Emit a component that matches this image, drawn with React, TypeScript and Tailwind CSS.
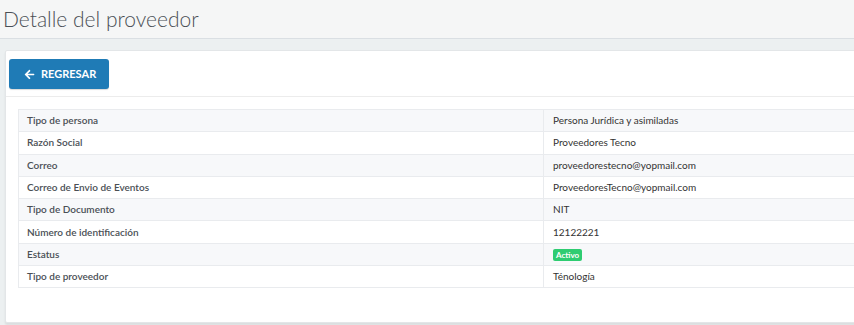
import { FaArrowLeft } from 'react-icons/fa'

const rows: { label: string; value: string; badge?: boolean }[] = [
  { label: 'Tipo de persona', value: 'Persona Jurídica y asimiladas' },
  { label: 'Razón Social', value: 'Proveedores Tecno' },
  { label: 'Correo', value: 'proveedorestecno@yopmail.com' },
  { label: 'Correo de Envio de Eventos', value: 'ProveedoresTecno@yopmail.com' },
  { label: 'Tipo de Documento', value: 'NIT' },
  { label: 'Número de identificación', value: '12122221' },
  { label: 'Estatus', value: 'Activo', badge: true },
  { label: 'Tipo de proveedor', value: 'Ténología' },
]

export default function App() {
  return (
    <div className="min-h-[325px] w-full overflow-hidden bg-[#ecf0f1] font-['Lato','Noto_Sans',sans-serif]">
      <div className="h-[39px] border-b border-[#dadfe3] bg-[#f5f6f6] pl-[3px]">
        <h1 className="text-[21px] leading-[38px] font-light text-[#4a4f55]">Detalle del proveedor</h1>
      </div>
      <div className="pt-[11px] pl-[5px]">
        <div className="w-[880px] rounded-[2px] border border-[#e3e6e8] bg-white shadow-[0_2px_2px_rgba(0,0,0,0.08)]">
          <div className="border-b border-[#ececec] px-[3px] pt-[8px] pb-[7px]">
            <button
              type="button"
              className="flex h-[30px] w-[100px] items-center gap-[6px] rounded-[3px] bg-[#1f7bb6] pl-[15px] text-[11px] font-bold text-white shadow-[0_1px_1px_rgba(0,0,0,0.15)]"
            >
              <FaArrowLeft className="h-[11px] w-[11px]" />
              REGRESAR
            </button>
          </div>
          <div className="px-[12px] pt-[12px] pb-[34px]">
            <table className="w-full border-collapse border border-[#e9ebee] text-[10px] text-[#444]">
              <tbody>
                {rows.map((r, i) => (
                  <tr key={r.label} className={i % 2 === 0 ? 'bg-[#f7f8fa]' : 'bg-white'}>
                    <td className="h-[22.3px] w-[525px] border border-[#e9ebee] pl-[8px] font-semibold text-[#4a4f55]">
                      {r.label}
                    </td>
                    <td className="h-[22.3px] border border-[#e9ebee] pl-[9px] text-[#333]">
                      {r.badge ? (
                        <span className="inline-block rounded-[2px] bg-[#2ecc71] px-[3px] py-[1px] text-[8px] leading-[10px] font-bold text-white">
                          {r.value}
                        </span>
                      ) : (
                        r.value
                      )}
                    </td>
                  </tr>
                ))}
              </tbody>
            </table>
          </div>
        </div>
      </div>
    </div>
  )
}
